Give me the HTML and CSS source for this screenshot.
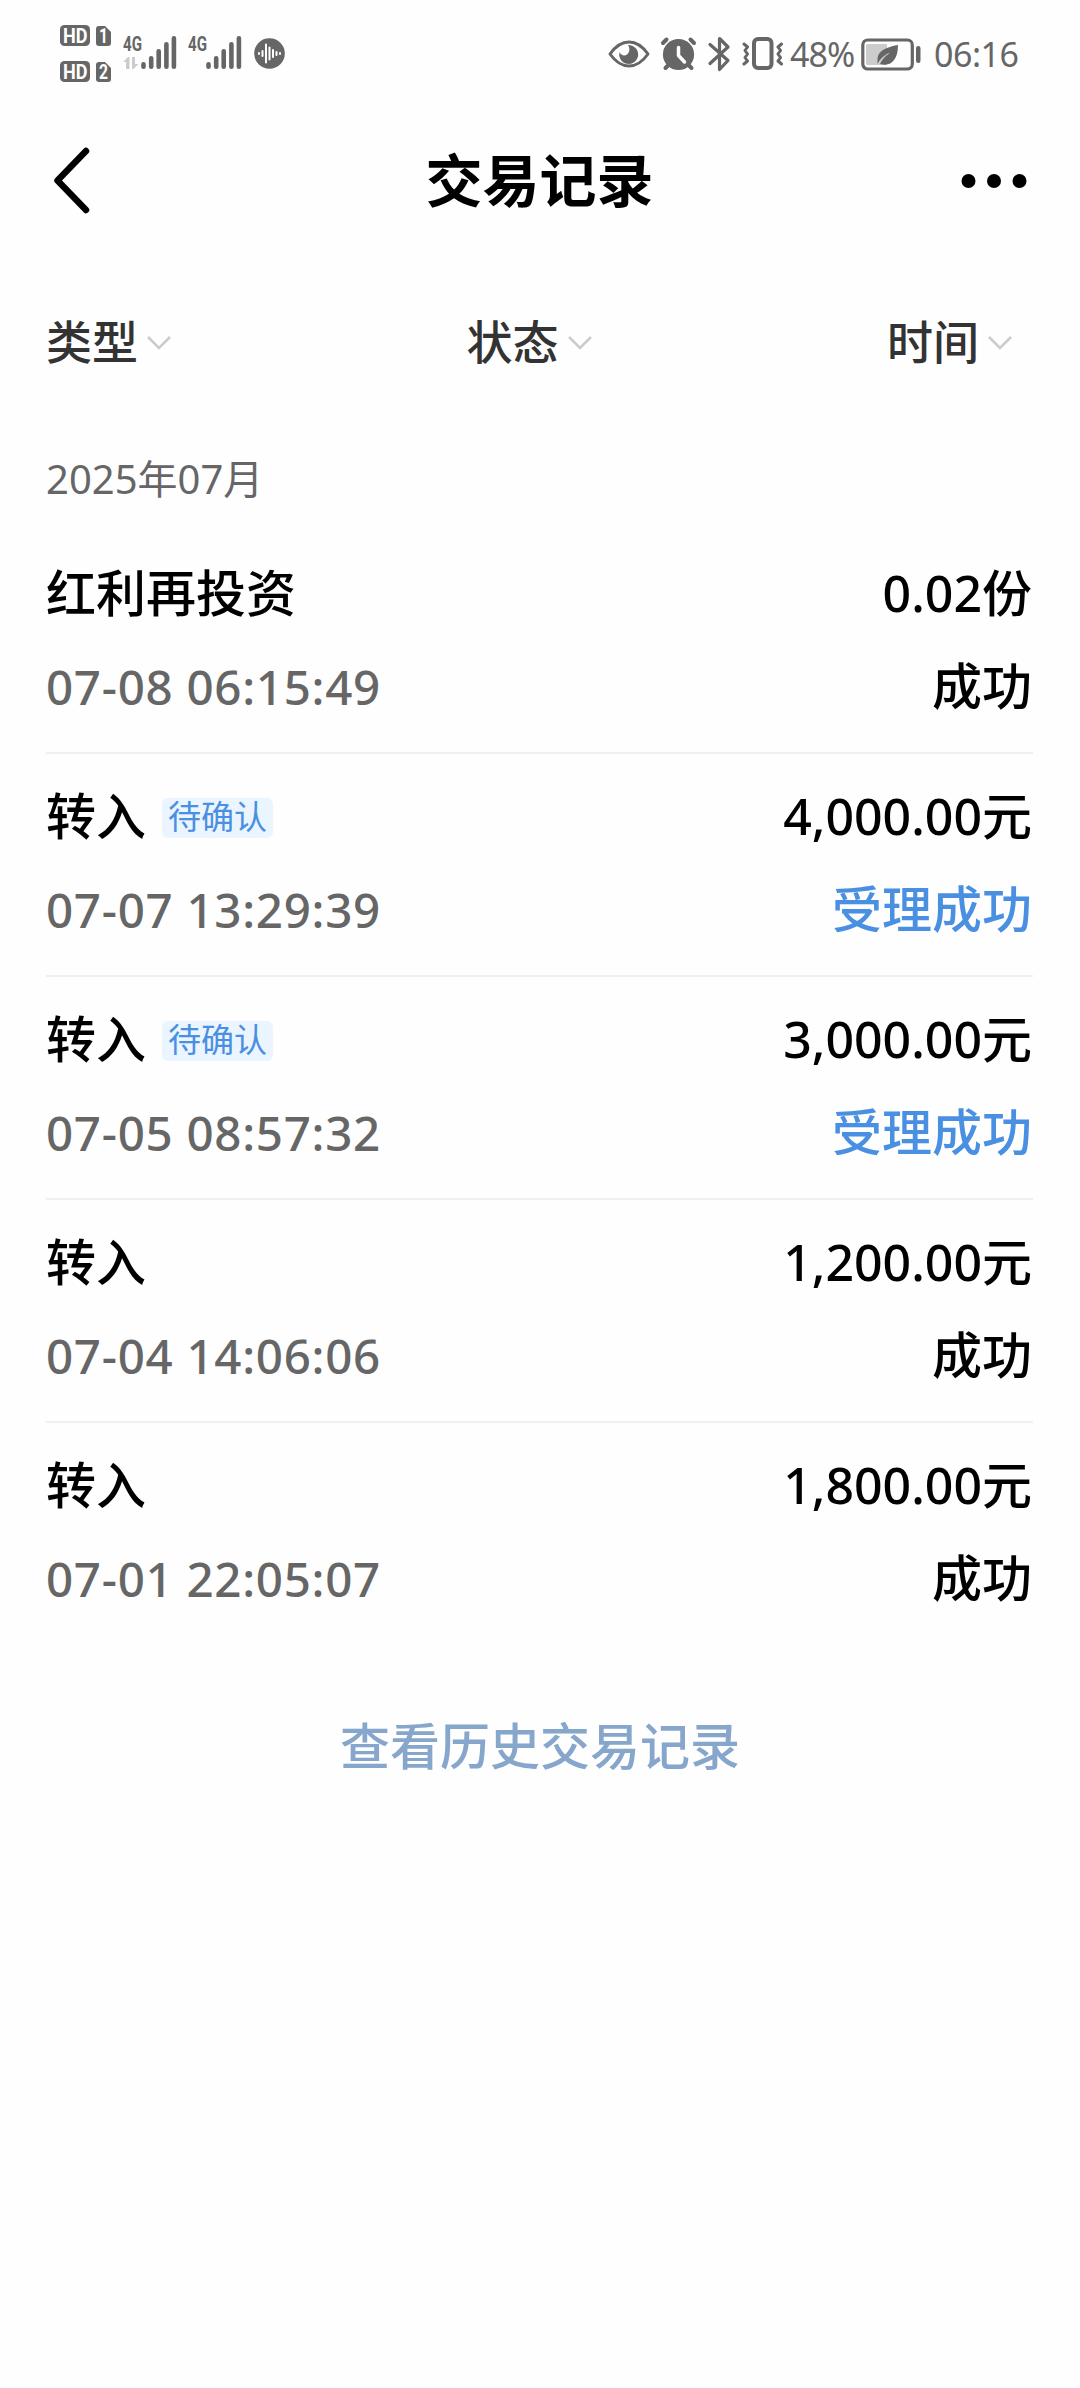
FILE: index.html
```html
<!DOCTYPE html>
<html lang="zh-CN">
<head>
  <meta charset="UTF-8">
  <meta name="viewport" content="width=device-width, initial-scale=1.0">
  <title>交易记录</title>
  <link rel="stylesheet" href="styles.css">
</head>
<body>
  <div class="status-bar">
    <div class="status-left">
      <svg class="icon" width="52" height="60" viewBox="0 0 52 60">
        <rect x="0" y="1" width="30" height="21" rx="4.5"/>
        <path d="M39 2h6l6 6v11a3 3 0 0 1-3 3h-9a3 3 0 0 1-3-3V5a3 3 0 0 1 3-3z"/>
        <rect x="0" y="37" width="30" height="21" rx="4.5"/>
        <path d="M39 38h6l6 6v11a3 3 0 0 1-3 3h-9a3 3 0 0 1-3-3V41a3 3 0 0 1 3-3z"/>
        <text class="badge-text" x="3" y="18.5" textLength="24.5" lengthAdjust="spacingAndGlyphs">HD</text>
        <text class="badge-text" x="39" y="19" textLength="9" lengthAdjust="spacingAndGlyphs">1</text>
        <text class="badge-text" x="3" y="54.5" textLength="24.5" lengthAdjust="spacingAndGlyphs">HD</text>
        <text class="badge-text" x="39" y="55" textLength="9" lengthAdjust="spacingAndGlyphs">2</text>
      </svg>
      <svg class="icon signal" width="54" height="60" viewBox="0 0 54 60">
        <text class="net-text" x="0" y="27" textLength="19" lengthAdjust="spacingAndGlyphs">4G</text>
        <path class="faint" d="M0 38l5-5h1.500v12H3v-7zM9 33h3v7h3.500l-5 5H9z"/>
        <path class="bars" d="M20.500 40.300v2.400M28.200 34.300v8.400M35.700 27.300v15.400M43.400 20.300v22.400M50.900 14.300v28.400"/>
      </svg>
      <svg class="icon signal" width="54" height="60" viewBox="0 0 54 60">
        <text class="net-text" x="0" y="27" textLength="19" lengthAdjust="spacingAndGlyphs">4G</text>
        <path class="bars" d="M20.500 40.300v2.400M28.200 34.300v8.400M35.700 27.300v15.400M43.400 20.300v22.400M50.900 14.300v28.400"/>
      </svg>
      <svg class="icon voice" width="31" height="31" viewBox="0 0 31 31">
        <circle cx="15.500" cy="15.500" r="15.300"/>
        <path class="wave" d="M5 15v1M8.500 13v5M12 6.500v18M15.500 9.500v12M19 12v7M22.500 14v3M26 15v1"/>
      </svg>
    </div>
    <div class="status-right">
      <svg class="icon" width="42" height="40" viewBox="0 0 42 40">
        <path class="line" stroke-width="3" d="M2 20C8 11.500 14 8 21 8s13 3.500 19 12c-6 8.500-12 12-19 12S8 28.500 2 20z"/>
        <path d="M20 11a9.500 9.500 0 1 1-8.500 7c1.500 3.500 5 4.500 7.500 2.500 3-2.500 3-6.500 1-9.500z"/>
      </svg>
      <svg class="icon alarm" width="37" height="40" viewBox="0 0 37 40">
        <circle cx="18.500" cy="20.500" r="15.600"/>
        <path class="line" stroke-width="4" d="M3 9l3.500-3.500M34 9l-3.500-3.500M5.500 34l3-3M31.500 34l-3-3"/>
        <path class="cut" d="M18.500 13.500v8l6 6.500"/>
      </svg>
      <svg class="icon bluetooth" width="24" height="40" viewBox="0 0 24 40">
        <path class="line" stroke-width="3.200" d="M3 10.500l18 16-8.500 9V4.500l8.500 8.500L3 29.500"/>
      </svg>
      <svg class="icon vibrate" width="41" height="40" viewBox="0 0 41 40">
        <rect class="line" stroke-width="4" x="12" y="5" width="17.500" height="29" rx="4"/>
        <path class="line" stroke-width="3" d="M2 10l3.500 3-2.500 3.500 2.500 3.500-2.500 3.500 2.500 3.500-3.500 3M39.500 10l-3.500 3 2.500 3.500-2.500 3.500 2.500 3.500-2.500 3.500 3.500 3"/>
      </svg>
      <span class="percent">48%</span>
      <svg class="icon battery" width="61" height="40" viewBox="0 0 61 40">
        <rect class="line" stroke-width="3.200" x="1.800" y="6" width="49.500" height="29" rx="5"/>
        <path class="level" d="M7 10h19v21H7a2 2 0 0 1-2-2V12a2 2 0 0 1 2-2z"/>
        <rect x="55" y="12" width="4.500" height="17" rx="2.200"/>
        <path d="M37 11c-12 2-20 6-20.500 13.500V30c3-6 7-9 12.500-11.500-5 3.500-8 7-10 11.500 11 3 18-4 18-19z"/>
      </svg>
      <span class="clock">06:16</span>
    </div>
  </div>

  <div class="nav">
    <svg class="back" width="40" height="68" viewBox="0 0 40 68">
      <path d="M34 4L5.500 33.500 34 63"/>
    </svg>
    <h1>交易记录</h1>
    <svg class="more" width="66" height="16" viewBox="0 0 66 16">
      <circle cx="7.500" cy="8" r="7"/>
      <circle cx="33" cy="8" r="7"/>
      <circle cx="58.500" cy="8" r="7"/>
    </svg>
  </div>

  <div class="filters">
    <div class="filter">类型<svg class="arrow" width="24" height="14" viewBox="0 0 24 14"><path d="M1 1l11 11L23 1"/></svg></div>
    <div class="filter">状态<svg class="arrow" width="24" height="14" viewBox="0 0 24 14"><path d="M1 1l11 11L23 1"/></svg></div>
    <div class="filter">时间<svg class="arrow" width="24" height="14" viewBox="0 0 24 14"><path d="M1 1l11 11L23 1"/></svg></div>
  </div>

  <div class="month">2025年07月</div>

  <div class="list">
    <div class="item">
      <div class="row"><span class="name">红利再投资</span><span class="amount">0.02份</span></div>
      <div class="row"><span class="time">07-08 06:15:49</span><span class="state">成功</span></div>
    </div>
    <div class="item">
      <div class="row"><span class="name">转入<span class="tag">待确认</span></span><span class="amount">4,000.00元</span></div>
      <div class="row"><span class="time">07-07 13:29:39</span><span class="state pending">受理成功</span></div>
    </div>
    <div class="item">
      <div class="row"><span class="name">转入<span class="tag">待确认</span></span><span class="amount">3,000.00元</span></div>
      <div class="row"><span class="time">07-05 08:57:32</span><span class="state pending">受理成功</span></div>
    </div>
    <div class="item">
      <div class="row"><span class="name">转入</span><span class="amount">1,200.00元</span></div>
      <div class="row"><span class="time">07-04 14:06:06</span><span class="state">成功</span></div>
    </div>
    <div class="item">
      <div class="row"><span class="name">转入</span><span class="amount">1,800.00元</span></div>
      <div class="row"><span class="time">07-01 22:05:07</span><span class="state">成功</span></div>
    </div>
  </div>

  <a class="history">查看历史交易记录</a>
</body>
</html>
```

FILE: styles.css
```css
* {
  box-sizing: border-box;
}

body {
  margin: 0;
  min-height: 100vh;
  background: #fefefe;
  color: #000;
  font-family: "Noto Sans", "Noto Sans CJK SC", sans-serif;
  font-weight: 500;
}

svg {
  display: block;
  flex: none;
}

.status-bar {
  display: flex;
  justify-content: space-between;
  height: 108px;
  padding: 0 60px;
  color: #666;
}

.status-left,
.status-right {
  display: flex;
  align-items: center;
  height: 107px;
}

.icon {
  fill: #666;
}

.badge-text {
  fill: #fff;
  font: bold 21px Roboto, sans-serif;
}

.net-text {
  font: bold 20.5px Roboto, sans-serif;
}

.faint {
  fill: #ccc;
}

.bars {
  stroke: #666;
  stroke-width: 4.6;
  stroke-linecap: round;
}

.signal {
  margin-left: 11px;
}

.voice {
  margin-left: 12px;
}

.wave {
  stroke: #fff;
  stroke-width: 2;
  stroke-linecap: round;
}

.line {
  fill: none;
  stroke: #666;
  stroke-linecap: round;
  stroke-linejoin: round;
}

.cut {
  fill: none;
  stroke: #fff;
  stroke-width: 3.5;
  stroke-linecap: round;
  stroke-linejoin: round;
}

.alarm {
  margin-left: 10px;
}

.bluetooth {
  margin-left: 10px;
}

.vibrate {
  margin-left: 11px;
}

.level {
  fill: #ccc;
}

.percent {
  width: 65px;
  margin-left: 7px;
  font-size: 34px;
  font-weight: 400;
  letter-spacing: -1px;
}

.battery {
  margin-left: 6px;
}

.clock {
  width: 86px;
  margin-left: 12px;
  font-size: 34px;
  font-weight: 400;
  letter-spacing: -0.5px;
}

.nav {
  display: flex;
  align-items: center;
  justify-content: space-between;
  height: 146px;
  padding: 0 53px 0 52px;
}

.back {
  margin-right: 26px;
  fill: none;
  stroke: #000;
  stroke-width: 6.5;
  stroke-linecap: round;
  stroke-linejoin: round;
}

h1 {
  margin: -3px 0 0;
  font-size: 57px;
  font-weight: bold;
  line-height: 80px;
}

.filters {
  display: flex;
  justify-content: space-between;
  padding: 52px 68px 0 46px;
}

.filter {
  display: flex;
  align-items: center;
  color: #333;
  font-size: 46px;
  line-height: 70px;
}

.arrow {
  margin: 3px 0 0 9px;
  fill: none;
  stroke: #ccc;
  stroke-width: 2.5;
}

.month {
  padding: 68px 46px 0;
  color: #666;
  font-size: 40px;
  font-weight: 400;
  line-height: 70px;
}

.list {
  margin: 17px 47px 0 46px;
}

.item {
  height: 223px;
  padding-top: 16px;
  border-bottom: 2px solid #f0f0f0;
}

.item:last-child {
  border-bottom: none;
}

.row {
  display: flex;
  align-items: center;
  justify-content: space-between;
  height: 93px;
  font-size: 50px;
  line-height: 93px;
}

.name {
  display: flex;
  align-items: center;
}

.amount,
.state {
  margin-right: 1px;
}

.tag {
  height: 40px;
  margin: 2px 0 0 16px;
  padding: 0 6px;
  border-radius: 6px;
  background: #ebf5ff;
  color: #4a90e2;
  font-size: 33px;
  font-weight: 400;
  line-height: 38px;
}

.time {
  color: #666;
  font-size: 47.5px;
  letter-spacing: 0.7px;
}

.pending {
  color: #4a90e2;
}

.history {
  display: block;
  margin-top: 65px;
  color: #86a6cb;
  font-size: 50px;
  line-height: 70px;
  text-align: center;
}
```
